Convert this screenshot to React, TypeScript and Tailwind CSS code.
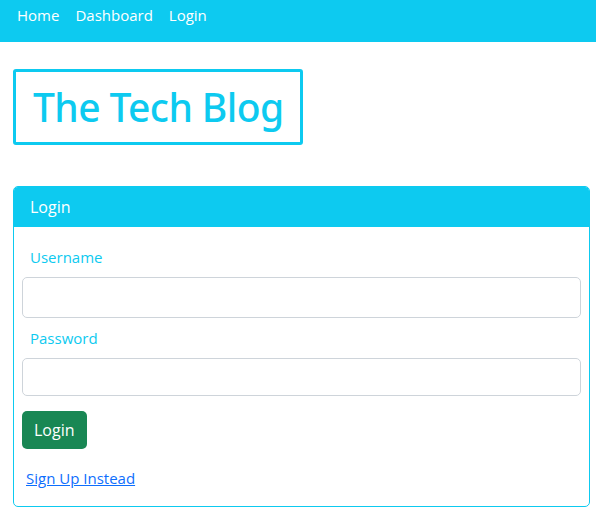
import React from 'react';

const App: React.FC = () => {
  return (
    <div className="min-h-[518px] bg-white text-[16px] font-['Open_Sans',sans-serif]">
      <nav className="h-[42px] bg-[#0dcaf0] flex items-start gap-4 px-[17px] pt-[3px] text-[15px]">
        <a className="text-white leading-[24px]">Home</a>
        <a className="text-white leading-[24px]">Dashboard</a>
        <a className="text-white leading-[24px]">Login</a>
      </nav>

      <header className="px-[13px] pt-[27px]">
        <div className="inline-block border-[3px] border-[#0dcaf0] rounded-[3px] px-[17px] py-[10px]">
          <h1 className="text-[#0dcaf0] text-[39px] font-['Noto_Sans',sans-serif] font-medium leading-[50px] tracking-[-0.6px]">The Tech Blog</h1>
        </div>
      </header>

      <main className="px-[13px] pt-[41px] pb-[10px]">
        <div className="w-[577px] border border-[#0dcaf0] rounded-[5px] overflow-hidden">
          <div className="bg-[#0dcaf0] h-[40px] flex items-center px-[16px] text-white">Login</div>
          <form className="px-[8px] pt-[19px] pb-[16px] flex flex-col">
            <label className="text-[#0dcaf0] text-[15px] px-[8px] leading-[22px]">Username</label>
            <input className="mt-[9px] h-[41px] border border-[#ced4da] rounded-[5px]" />
            <label className="mt-[9px] text-[#0dcaf0] text-[15px] px-[8px] leading-[22px]">Password</label>
            <input className="mt-[9px] h-[38px] border border-[#ced4da] rounded-[5px]" />
            <div className="mt-[15px]">
              <button type="button" className="bg-[#198754] text-white rounded-[5px] h-[38px] px-[12px]">Login</button>
            </div>
            <a className="mt-[17px] ml-[4px] text-[#0d6efd] text-[15px] underline leading-[24px] self-start">Sign Up Instead</a>
          </form>
        </div>
      </main>
    </div>
  );
};

export default App;
